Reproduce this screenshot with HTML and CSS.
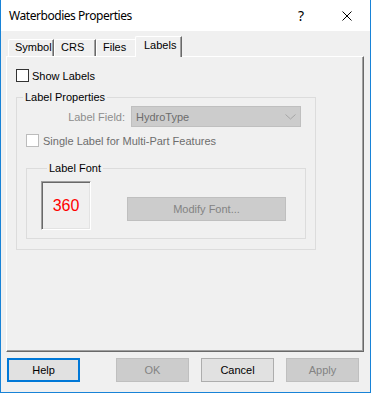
FILE: index.html
```html
<!DOCTYPE html>
<html lang="en">
<head>
    <meta charset="UTF-8">
    <title>Waterbodies Properties</title>
    <link rel="stylesheet" href="styles.css">
</head>
<body>
    <div class="window">
        <div class="titlebar">
            <span class="title">Waterbodies Properties</span>
            <span class="caption-btn help-btn">?</span>
            <span class="caption-btn">
                <svg width="10" height="10" viewBox="0 0 10 10"><path d="M0.5 0.5 L9.5 9.5 M9.5 0.5 L0.5 9.5" stroke="#000" stroke-width="1" fill="none"/></svg>
            </span>
        </div>

        <div class="tabs">
            <div class="tab tab-symbol">Symbol</div>
            <div class="tab tab-crs">CRS</div>
            <div class="tab tab-files">Files</div>
            <div class="tab active">Labels</div>
        </div>

        <div class="panel">
            <label class="check-row">
                <span class="checkbox"></span>
                <span>Show Labels</span>
            </label>

            <fieldset class="group group-props">
                <legend>Label Properties</legend>
                <div class="field-row">
                    <span class="field-label">Label Field:</span>
                    <div class="combo">
                        <span>HydroType</span>
                        <svg width="11" height="6" viewBox="0 0 11 6"><path d="M0.5 0.5 L5.5 5 L10.5 0.5" stroke="#a6a6a6" stroke-width="1" fill="none"/></svg>
                    </div>
                </div>
                <label class="check-row disabled single-row">
                    <span class="checkbox"></span>
                    <span>Single Label for Multi-Part Features</span>
                </label>

                <fieldset class="group group-font">
                    <legend>Label Font</legend>
                    <div class="font-row">
                        <div class="preview">360</div>
                        <button class="btn disabled modify-btn">Modify Font...</button>
                    </div>
                </fieldset>
            </fieldset>
        </div>

        <div class="buttons">
            <button class="btn focused">Help</button>
            <button class="btn disabled ok-btn">OK</button>
            <button class="btn">Cancel</button>
            <button class="btn disabled">Apply</button>
        </div>
    </div>
</body>
</html>
```

FILE: styles.css
```css
body {
    margin: 0;
    background-color: #f0f0f0;
    font-family: 'Liberation Sans', Arial, sans-serif;
    font-size: 11px;
    color: #000;
}

.window {
    width: 371px;
    height: 393px;
    box-sizing: border-box;
    border: 1px solid #1883d7;
    border-top: none;
    background-color: #f0f0f0;
}

.titlebar {
    height: 31px;
    display: flex;
    align-items: center;
    background-color: #fff;
}

.title {
    flex: 1;
    padding-left: 8px;
    font-family: 'Noto Sans', sans-serif;
    font-size: 12px;
    letter-spacing: -0.45px;
}

.caption-btn {
    width: 46px;
    height: 31px;
    display: flex;
    align-items: center;
    justify-content: center;
}

.help-btn {
    font-family: 'Noto Sans', sans-serif;
    font-size: 14px;
}

/* tab strip */
.tabs {
    height: 25px;
    display: flex;
    align-items: flex-end;
    padding-left: 7px;
}

.tab {
    height: 17px;
    box-sizing: border-box;
    padding-left: 6px;
    line-height: 15px;
    border-top: 1px solid #fff;
    border-left: 1px solid #fff;
    border-right: 1px solid #696969;
    box-shadow: inset -1px 0 #a0a0a0;
    border-top-left-radius: 2px;
}

.tab-symbol { width: 46px; }
.tab-crs { width: 42px; }
.tab-files { width: 41px; }

.tab.active {
    width: 47px;
    height: 21px;
    margin-left: -2px;
    margin-bottom: -1px;
    padding-left: 8px;
    line-height: 17px;
    background-color: #f0f0f0;
    position: relative;
    z-index: 1;
}

/* tab page */
.panel {
    width: 358px;
    height: 296px;
    box-sizing: border-box;
    margin-left: 5px;
    padding: 12px 0 0 9px;
    border-top: 1px solid #fff;
    border-left: 1px solid #fff;
    border-right: 1px solid #696969;
    border-bottom: 1px solid #696969;
    box-shadow: inset -1px -1px #a0a0a0;
}

.check-row {
    display: flex;
    align-items: center;
    gap: 3px;
    height: 13px;
}

.checkbox {
    width: 13px;
    height: 13px;
    box-sizing: border-box;
    border: 1px solid #333;
    background-color: #fff;
}

.check-row.disabled {
    color: #6d6d6d;
}

.check-row.disabled .checkbox {
    border-color: #bcbcbc;
}

.group {
    margin: 0;
    padding: 0;
    border: 1px solid #dcdcdc;
    min-inline-size: 0;
}

.group legend {
    margin-left: 6px;
    padding: 0 2px;
    line-height: 13px;
}

.group-props {
    width: 300px;
    box-sizing: border-box;
    margin-top: 9px;
    padding: 2px 0 10px 0;
}

.field-row {
    display: flex;
    align-items: center;
}

.field-label {
    width: 108px;
    margin-right: 6px;
    text-align: right;
    color: #8d8d8d;
}

.combo {
    width: 170px;
    height: 21px;
    box-sizing: border-box;
    display: flex;
    align-items: center;
    justify-content: space-between;
    padding: 0 4px 0 4px;
    background-color: #cccccc;
    border: 1px solid #bfbfbf;
    color: #6d6d6d;
}

.single-row {
    margin: 7px 0 0 9px;
    gap: 4px;
}

.group-font {
    width: 280px;
    box-sizing: border-box;
    margin: 15px 0 0 9px;
    padding: 6px 0 8px 14px;
}

.font-row {
    display: flex;
    align-items: flex-start;
}

.preview {
    width: 50px;
    height: 49px;
    box-sizing: border-box;
    display: flex;
    align-items: center;
    justify-content: center;
    border: 1px solid;
    border-color: #a0a0a0 #fff #fff #a0a0a0;
    box-shadow: inset 1px 1px #696969, inset -1px -1px #e3e3e3;
    color: #ff0000;
    font-size: 16px;
}

.btn {
    width: 73px;
    height: 24px;
    padding: 0;
    box-sizing: border-box;
    font-family: 'Liberation Sans', Arial, sans-serif;
    font-size: 11px;
    color: #000;
    background-color: #e1e1e1;
    border: 1px solid #adadad;
}

.btn.disabled {
    color: #838383;
    background-color: #cccccc;
    border-color: #bfbfbf;
}

.btn.focused {
    border: 2px solid #0078d7;
}

.modify-btn {
    width: 159px;
    margin: 16px 0 0 36px;
}

/* dialog buttons */
.buttons {
    display: flex;
    gap: 12px;
    padding: 6px 0 0 6px;
}

.ok-btn {
    margin-left: 24px;
}
```
